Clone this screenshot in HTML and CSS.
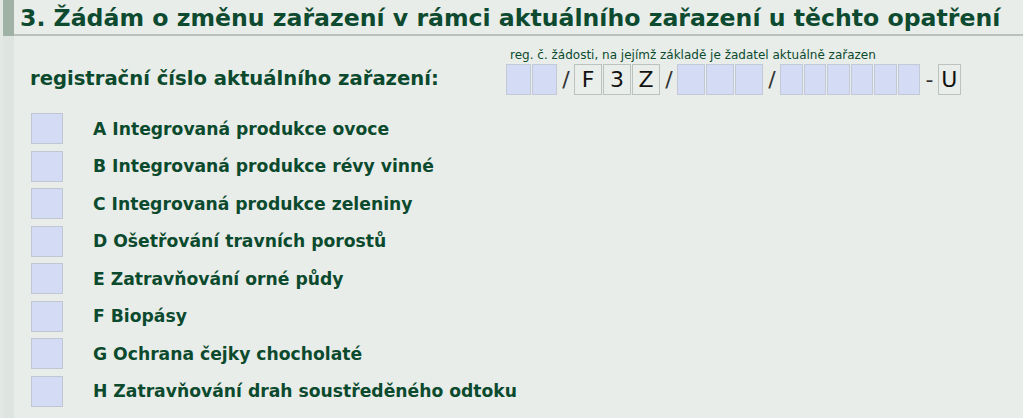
FILE: index.html
```
<!DOCTYPE html>
<html lang="cs">
<head>
<meta charset="utf-8">
<link rel="stylesheet" href="styles.css">
</head>
<body>
<div class="page">
  <div class="rail"><div class="rail-top"></div></div>
  <div class="content">
    <h1 class="title">3. Žádám o změnu zařazení v rámci aktuálního zařazení u těchto opatření</h1>
    <div class="reg">
      <div class="reg-label">registrační číslo aktuálního zařazení:</div>
      <div class="reg-field">
        <div class="caption">reg. č. žádosti, na jejímž základě je žadatel aktuálně zařazen</div>
        <div class="boxes">
          <span class="cell blue"></span><span class="cell blue"></span>
          <span class="sep">/</span>
          <span class="cell fixed">F</span><span class="cell fixed">3</span><span class="cell fixed">Z</span>
          <span class="sep">/</span>
          <span class="cell blue wide"></span><span class="cell blue wide"></span><span class="cell blue wide"></span>
          <span class="sep">/</span>
          <span class="cell blue narrow"></span><span class="cell blue narrow"></span><span class="cell blue narrow"></span><span class="cell blue narrow"></span><span class="cell blue narrow"></span><span class="cell blue narrow"></span>
          <span class="sep dash">-</span>
          <span class="cell fixed narrow">U</span>
        </div>
      </div>
    </div>
    <ul class="options">
      <li class="option"><span class="check"></span><span class="opt-label">A Integrovaná produkce ovoce</span></li>
      <li class="option"><span class="check"></span><span class="opt-label">B Integrovaná produkce révy vinné</span></li>
      <li class="option"><span class="check"></span><span class="opt-label">C Integrovaná produkce zeleniny</span></li>
      <li class="option"><span class="check"></span><span class="opt-label">D Ošetřování travních porostů</span></li>
      <li class="option"><span class="check"></span><span class="opt-label">E Zatravňování orné půdy</span></li>
      <li class="option"><span class="check"></span><span class="opt-label">F Biopásy</span></li>
      <li class="option"><span class="check"></span><span class="opt-label">G Ochrana čejky chocholaté</span></li>
      <li class="option"><span class="check"></span><span class="opt-label">H Zatravňování drah soustředěného odtoku</span></li>
    </ul>
  </div>
</div>
</body>
</html>
```
FILE: styles.css
```
html, body {
  margin: 0;
  padding: 0;
  background: #e8ede9;
}
body {
  font-family: "DejaVu Sans", Verdana, sans-serif;
  color: #0c4a2e;
}
.page {
  display: flex;
  width: 1023px;
  height: 418px;
  overflow: hidden;
}
.rail {
  width: 11px;
  flex: none;
  border-left: 3px solid #e3e8e4;
  background: #dee4e0;
  display: flex;
  flex-direction: column;
}
.rail-top {
  height: 36px;
  background: #9fb2a5;
}
.content {
  flex: 1;
  min-width: 0;
}
.title {
  margin: 0;
  height: 34px;
  padding-left: 6px;
  font-size: 23.6px;
  line-height: 36px;
  font-weight: bold;
  color: #0d4a2f;
  border-bottom: 2px solid #b9c1bc;
  white-space: nowrap;
}
.reg {
  display: flex;
  align-items: flex-end;
  padding-left: 16px;
  margin-top: 11px;
}
.reg-label {
  width: 476px;
  font-size: 19.6px;
  font-weight: bold;
  line-height: 30px;
  padding-bottom: 1px;
}
.reg-field {
  display: flex;
  flex-direction: column;
}
.caption {
  font-size: 12px;
  line-height: 16px;
  padding-left: 4px;
  margin-bottom: 1px;
}
.boxes {
  display: flex;
  align-items: center;
  height: 31px;
}
.cell {
  box-sizing: border-box;
  width: 25px;
  height: 31px;
  border: 1px solid #bcc1c4;
  margin-right: 1px;
  font-size: 22px;
  color: #111;
  display: flex;
  align-items: center;
  justify-content: center;
}
.cell.blue {
  background: #d3dbf5;
  border-color: #c3c9d6;
}
.cell.fixed {
  width: 28px;
  background: #eaeeea;
  border-color: #bcc2be;
}
.cell.wide {
  width: 28px;
}
.cell.narrow {
  width: 22.5px;
}
.sep {
  width: 16px;
  text-align: center;
  font-size: 22px;
  color: #333;
}
.sep.dash {
  width: 17px;
}
.options {
  list-style: none;
  margin: 15px 0 0 0;
  padding: 0 0 0 17px;
}
.option {
  display: flex;
  align-items: center;
  height: 37.5px;
}
.check {
  box-sizing: border-box;
  width: 32px;
  height: 31px;
  background: #d3dbf5;
  border: 1px solid #c0c6d2;
  flex: none;
}
.opt-label {
  margin-left: 30px;
  font-size: 17.2px;
  font-weight: bold;
}
```
